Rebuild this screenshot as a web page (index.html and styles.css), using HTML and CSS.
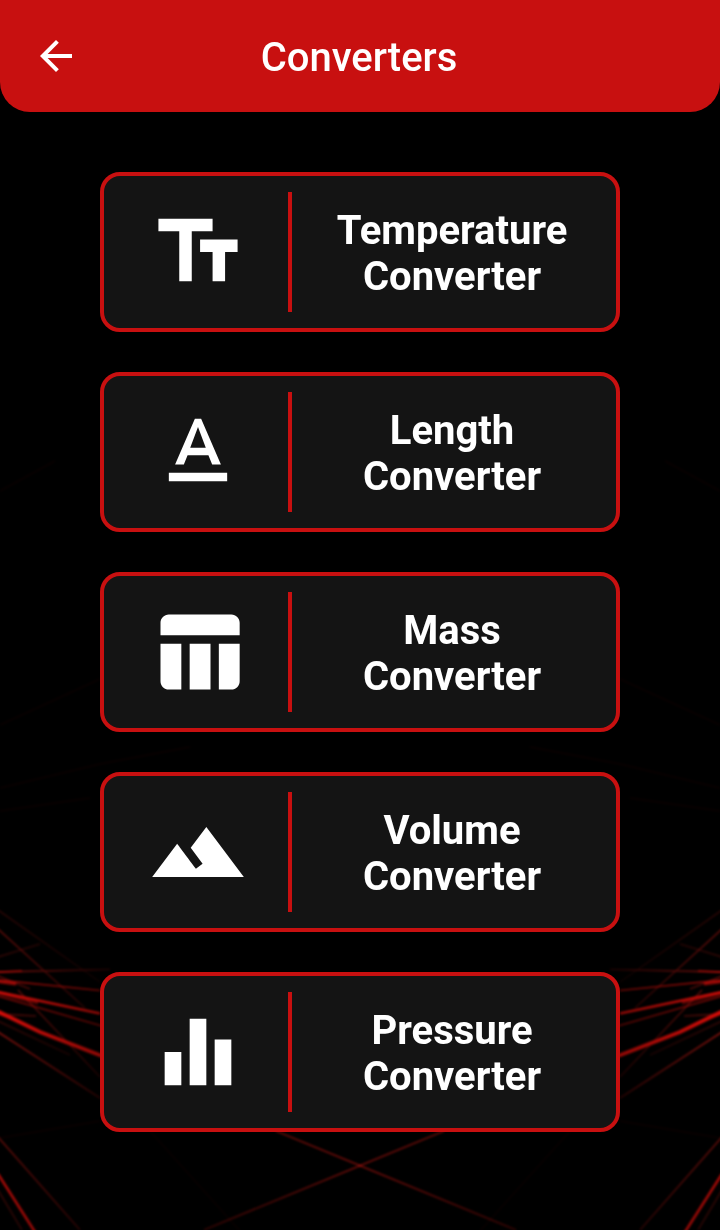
FILE: index.html
```html
<!DOCTYPE html>
<html lang="en">
<head>
<meta charset="utf-8">
<title>Converters</title>
<link rel="stylesheet" href="styles.css">
</head>
<body>
<div class="screen">
  <svg class="backdrop" viewBox="0 0 720 1230" aria-hidden="true">
    <defs>
      <filter id="soft" filterUnits="userSpaceOnUse" x="-20" y="0" width="760" height="1260" color-interpolation-filters="sRGB"><feGaussianBlur stdDeviation="0.8"/></filter>
      <linearGradient id="beam" gradientUnits="userSpaceOnUse" x1="0" y1="0" x2="140" y2="0">
        <stop offset="0" stop-color="#d00c08"/>
        <stop offset=".7" stop-color="#900805"/>
        <stop offset="1" stop-color="#600402"/>
      </linearGradient>
      <linearGradient id="fade" gradientUnits="userSpaceOnUse" x1="0" y1="0" x2="105" y2="0">
        <stop offset="0" stop-color="#80100c"/>
        <stop offset="1" stop-color="#200202"/>
      </linearGradient>
      <linearGradient id="cross" gradientUnits="userSpaceOnUse" x1="278" y1="0" x2="516" y2="0">
        <stop offset="0" stop-color="#600a07"/>
        <stop offset=".35" stop-color="#6c0b08"/>
        <stop offset="1" stop-color="#300403"/>
      </linearGradient>
      <g id="rays" fill="none" filter="url(#soft)">
        <g stroke="url(#fade)" stroke-width="1.5">
          <path opacity=".4" d="M-2 910L100 982M-2 957L40 944"/>
          <path opacity=".8" d="M-2 929L85 1008M18 990L100 1077"/>
          <path d="M-2 972L110 969.4"/>
          <path d="M-2 1032L100 1098"/>
          <path opacity=".8" d="M-2 1137L80 1230"/>
          <path opacity=".4" d="M-2 1021L70 1055M-2 1190L22 1230"/>
          <path opacity=".7" d="M-2 1014L36 1016M-2 976L30 989"/>
        </g>
        <g stroke="url(#beam)">
          <path stroke-width="1.6" opacity=".75" d="M-2 972L22 971M-2 980L100 990.5"/>
          <path stroke-width="3" opacity=".7" d="M-2 981.5L16 984"/>
          <path stroke-width="2.6" d="M-2 992L100 1013.5"/>
          <path stroke-width="1.6" opacity=".6" d="M-2 996L102 1026"/>
          <path stroke-width="3" opacity=".5" d="M-2 993L38 1003"/>
          <path stroke-width="4" d="M-2 1011.5L40 1032L102 1056"/>
          <path stroke-width="3" opacity=".7" d="M-2 1013L12 1018"/>
          <path stroke-width="2.6" opacity=".8" d="M-2 1174L35 1232"/>
        </g>
        <path stroke="url(#cross)" stroke-width="1.8" d="M276 1131L516 1230"/>
        <path stroke="#120202" d="M150 1131L240 1231M0 1138L100 1121M0 788L100 764L190 747M0 491L55 461M0 725L100 679M0 811L90 798"/>
      </g>
    </defs>
    <use href="#rays"/>
    <use class="mirrored" href="#rays" transform="translate(720 0) scale(-1 1)"/>
  </svg>

  <header class="topbar">
    <svg class="back" viewBox="0 0 24 24"><path d="M20 11H7.83l5.59-5.59L12 4l-8 8 8 8 1.41-1.41L7.83 13H20v-2z"/></svg>
    <h1 class="title">Converters</h1>
  </header>

  <main class="list">
    <a class="card">
      <span class="card-icon"><svg viewBox="0 0 24 24"><path d="M2.5 4v3h5v12h3V7h5V4h-13zm19 5h-9v3h3v7h3v-7h3V9z"/></svg></span>
      <span class="card-label">Temperature<br>Converter</span>
    </a>
    <a class="card">
      <span class="card-icon"><svg viewBox="0 0 24 24"><path d="M5 17v2h14v-2H5zm4.5-4.2h5l.9 2.2h2.1L12.75 4h-1.5L6.5 15h2.1l.9-2.2zM12 5.98L13.87 11h-3.74L12 5.98z"/></svg></span>
      <span class="card-label">Length<br>Converter</span>
    </a>
    <a class="card">
      <span class="card-icon"><svg viewBox="0 0 24 24"><path d="M10 10.02h5V21h-5V10.02zM17 21h3c1.1 0 2-.9 2-2v-9h-5v11zm3-18H5c-1.1 0-2 .9-2 2v3h19V5c0-1.1-.9-2-2-2zM3 19c0 1.1.9 2 2 2h3V10H3v9z"/></svg></span>
      <span class="card-label">Mass<br>Converter</span>
    </a>
    <a class="card">
      <span class="card-icon"><svg viewBox="0 0 24 24"><path d="M14 6l-3.75 5 2.85 3.8-1.6 1.2C9.81 13.75 7 10 7 10l-6 8h22L14 6z"/></svg></span>
      <span class="card-label">Volume<br>Converter</span>
    </a>
    <a class="card">
      <span class="card-icon"><svg viewBox="0 0 24 24"><path d="M10 20h4V4h-4v16zm-6 0h4v-8H4v8zM16 9v11h4V9h-4z"/></svg></span>
      <span class="card-label">Pressure<br>Converter</span>
    </a>
  </main>
</div>
</body>
</html>
```
FILE: styles.css
```css
* { box-sizing: border-box; }
body {
  margin: 0;
  background: #000;
  color: #fff;
  font-family: Roboto, "Liberation Sans", sans-serif;
}
.screen {
  position: relative;
  height: 1230px;
  overflow: hidden;
}
.backdrop {
  position: absolute;
  inset: 0;
  width: 720px;
  height: 1230px;
}
.mirrored {
  mix-blend-mode: screen;
}
.topbar {
  position: relative;
  display: grid;
  grid-template-columns: 48px 1fr 48px;
  align-items: center;
  height: 112px;
  padding: 0 32px;
  background: #c81010;
  border-radius: 0 0 30px 30px;
}
.back {
  width: 48px;
  height: 48px;
  fill: #fff;
}
.title {
  margin: 0;
  padding: 4px 2px 0 0;
  font-size: 40px;
  font-weight: 500;
  line-height: 48px;
  text-align: center;
}
.list {
  position: relative;
  display: flex;
  flex-direction: column;
  gap: 40px;
  padding: 60px 100px 0;
}
.card {
  display: flex;
  align-items: center;
  height: 160px;
  border: 4px solid #c81010;
  border-radius: 20px;
  background: #141414;
}
.card-icon {
  display: flex;
  align-items: center;
  justify-content: center;
  width: 188px;
  height: 120px;
  padding-left: 4px;
  border-right: 4px solid #c81010;
}
.card-icon svg {
  width: 100px;
  height: 100px;
  fill: #fff;
}
.card-label {
  flex: 1;
  padding: 4px 4px 0 0;
  font-size: 40px;
  font-weight: 700;
  line-height: 46px;
  text-align: center;
}
```
